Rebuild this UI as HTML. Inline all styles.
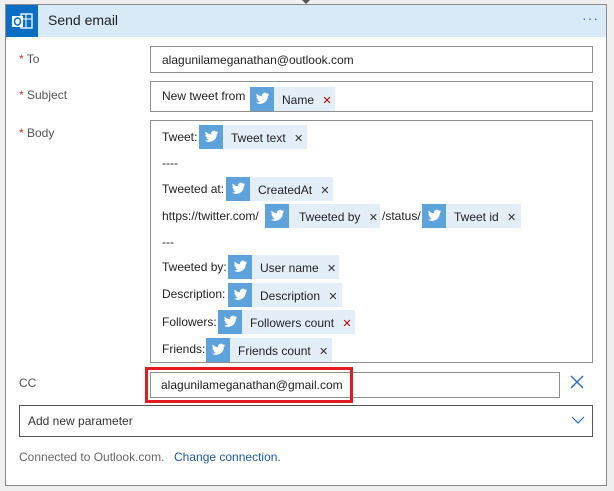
<!DOCTYPE html>
<html><head><style>
body{margin:0;width:614px;height:491px;background:#f0f0f0;font-family:"Liberation Sans",sans-serif;font-size:12px;color:#222;position:relative;overflow:hidden}
.a{position:absolute}
.card{left:5px;top:4px;width:600px;height:480px;background:#fff;border:1px solid #8a8a8a}
.hdr{left:6px;top:5px;width:600px;height:32px;background:#d8e9f7}
.box{border:1px solid #8f8f8f;background:#fff;box-sizing:border-box}
.lbl{color:#555;font-size:12px}
.req{color:#d13438}
.tok{position:absolute;height:24px;background:#e3eef9;white-space:nowrap;line-height:24px;font-size:12px;color:#222}
.tok .ic{position:absolute;left:0;top:0;width:24px;height:24px;background:#5da2da}
.tok .t{position:absolute;left:32px;top:1px}
.x{color:#333;font-size:11px}
.xr{color:#b00;font-size:11px}
.tx{position:absolute;font-size:12px;color:#222}
</style></head><body>
<div class="a" style="left:302px;top:0;width:0;height:0;border-left:4px solid transparent;border-right:4px solid transparent;border-top:4px solid #555"></div>
<div class="a card"></div>
<div class="a hdr"></div>
<div class="a" style="left:6px;top:5px;width:32px;height:32px;background:#0a6fc2">
<svg width="32" height="32" viewBox="0 0 32 32"><rect x="15" y="9" width="11" height="14" fill="none" stroke="#fff" stroke-width="1.3"/><path d="M15 14h11M20 9v14" stroke="#fff" stroke-width="1"/><rect x="6" y="11" width="11" height="11" fill="#fff"/><ellipse cx="11.5" cy="16.5" rx="3" ry="3.6" fill="none" stroke="#0a6fc2" stroke-width="1.6"/></svg></div>
<div class="a" style="left:48px;top:12px;font-size:14px;color:#222">Send email</div>
<div class="a" style="left:582px;top:10px;color:#3a6ea8;font-size:14px;letter-spacing:1px">···</div>

<div class="a lbl" style="left:19px;top:52px"><span class="req">*</span> To</div>
<div class="a lbl" style="left:19px;top:88px"><span class="req">*</span> Subject</div>
<div class="a lbl" style="left:19px;top:126px"><span class="req">*</span> Body</div>
<div class="a lbl" style="left:19px;top:376px">CC</div>

<div class="a box" style="left:150px;top:46px;width:443px;height:27px"></div>
<div class="tx" style="left:162px;top:53px">alagunilameganathan@outlook.com</div>
<div class="a box" style="left:150px;top:81px;width:443px;height:31px"></div>
<div class="tx" style="left:162px;top:89px">New tweet from</div>
<div class="a box" style="left:150px;top:120px;width:443px;height:243px"></div>

<div class="tx" style="left:162px;top:130px">Tweet:</div>
<div class="tx" style="left:162px;top:156px">----</div>
<div class="tx" style="left:162px;top:182px">Tweeted at:</div>
<div class="tx" style="left:162px;top:209px">https://twitter.com/</div>
<div class="tx" style="left:382px;top:209px">/status/</div>
<div class="tx" style="left:162px;top:235px">---</div>
<div class="tx" style="left:162px;top:260px">Tweeted by:</div>
<div class="tx" style="left:162px;top:287px">Description:</div>
<div class="tx" style="left:162px;top:315px">Followers:</div>
<div class="tx" style="left:162px;top:342px">Friends:</div>

<svg width="0" height="0" style="position:absolute"><defs><symbol id="b" viewBox="0 0 24 24"><path fill="#fff" d="M19 7.2c-.5.2-1 .4-1.6.4.6-.3 1-.9 1.2-1.5-.5.3-1.1.5-1.7.7a2.7 2.7 0 0 0-4.7 2.5C9.9 9.2 8 8.1 6.7 6.500c-.7 1.2-.3 2.800.8 3.600-.4 0-.9-.1-1.200-.3 0 1.300.9 2.400 2.200 2.700-.4.100-.8.100-1.200.1.3 1.100 1.400 1.900 2.600 1.900A5.500 5.500 0 0 1 5.900 15.600 7.700 7.700 0 0 0 17.800 9c.5-.4 1-.9 1.200-1.800z"/></symbol></defs></svg>

<div class="tok" style="left:250px;top:87px;width:85px"><svg class="ic" viewBox="0 0 24 24"><use href="#b"/></svg><span class="t">Name <span class="xr" style="margin-left:5px">✕</span></span></div>
<div class="tok" style="left:199px;top:125px;width:108px"><svg class="ic" viewBox="0 0 24 24"><use href="#b"/></svg><span class="t">Tweet text <span class="x" style="margin-left:5px">✕</span></span></div>
<div class="tok" style="left:226px;top:177px;width:107px"><svg class="ic" viewBox="0 0 24 24"><use href="#b"/></svg><span class="t">CreatedAt <span class="x" style="margin-left:5px">✕</span></span></div>
<div class="tok" style="left:265px;top:204px;width:115px"><svg class="ic" viewBox="0 0 24 24"><use href="#b"/></svg><span class="t" style="left:34px">Tweeted by <span class="x" style="margin-left:5px">✕</span></span></div>
<div class="tok" style="left:422px;top:204px;width:99px"><svg class="ic" viewBox="0 0 24 24"><use href="#b"/></svg><span class="t">Tweet id <span class="x" style="margin-left:5px">✕</span></span></div>
<div class="tok" style="left:228px;top:255px;width:111px"><svg class="ic" viewBox="0 0 24 24"><use href="#b"/></svg><span class="t">User name <span class="x" style="margin-left:5px">✕</span></span></div>
<div class="tok" style="left:228px;top:283px;width:114px"><svg class="ic" viewBox="0 0 24 24"><use href="#b"/></svg><span class="t">Description <span class="x" style="margin-left:5px">✕</span></span></div>
<div class="tok" style="left:218px;top:310px;width:137px"><svg class="ic" viewBox="0 0 24 24"><use href="#b"/></svg><span class="t">Followers count <span class="xr" style="margin-left:5px">✕</span></span></div>
<div class="tok" style="left:206px;top:338px;width:126px"><svg class="ic" viewBox="0 0 24 24"><use href="#b"/></svg><span class="t">Friends count <span class="x" style="margin-left:5px">✕</span></span></div>

<div class="a box" style="left:150px;top:372px;width:410px;height:26px"></div>
<div class="tx" style="left:161px;top:378px">alagunilameganathan@gmail.com</div>
<div class="a" style="left:145px;top:367px;width:208px;height:36px;box-sizing:border-box;border:3px solid #e31b23"></div>
<svg class="a" style="left:570px;top:375px" width="14" height="14"><path d="M1 1L13 13M13 1L1 13" stroke="#2a6cb8" stroke-width="1.4"/></svg>

<div class="a box" style="left:19px;top:405px;width:574px;height:32px;border-color:#555"></div>
<div class="tx" style="left:28px;top:414px;color:#333">Add new parameter</div>
<svg class="a" style="left:571px;top:416px" width="14" height="9"><path d="M1 1L7 7L13 1" fill="none" stroke="#2a6cb8" stroke-width="1.2"/></svg>

<div class="tx" style="left:19px;top:450px;color:#666">Connected to Outlook.com.</div>
<div class="tx" style="left:174px;top:450px;color:#1f5a9e">Change connection.</div>
</body></html>
